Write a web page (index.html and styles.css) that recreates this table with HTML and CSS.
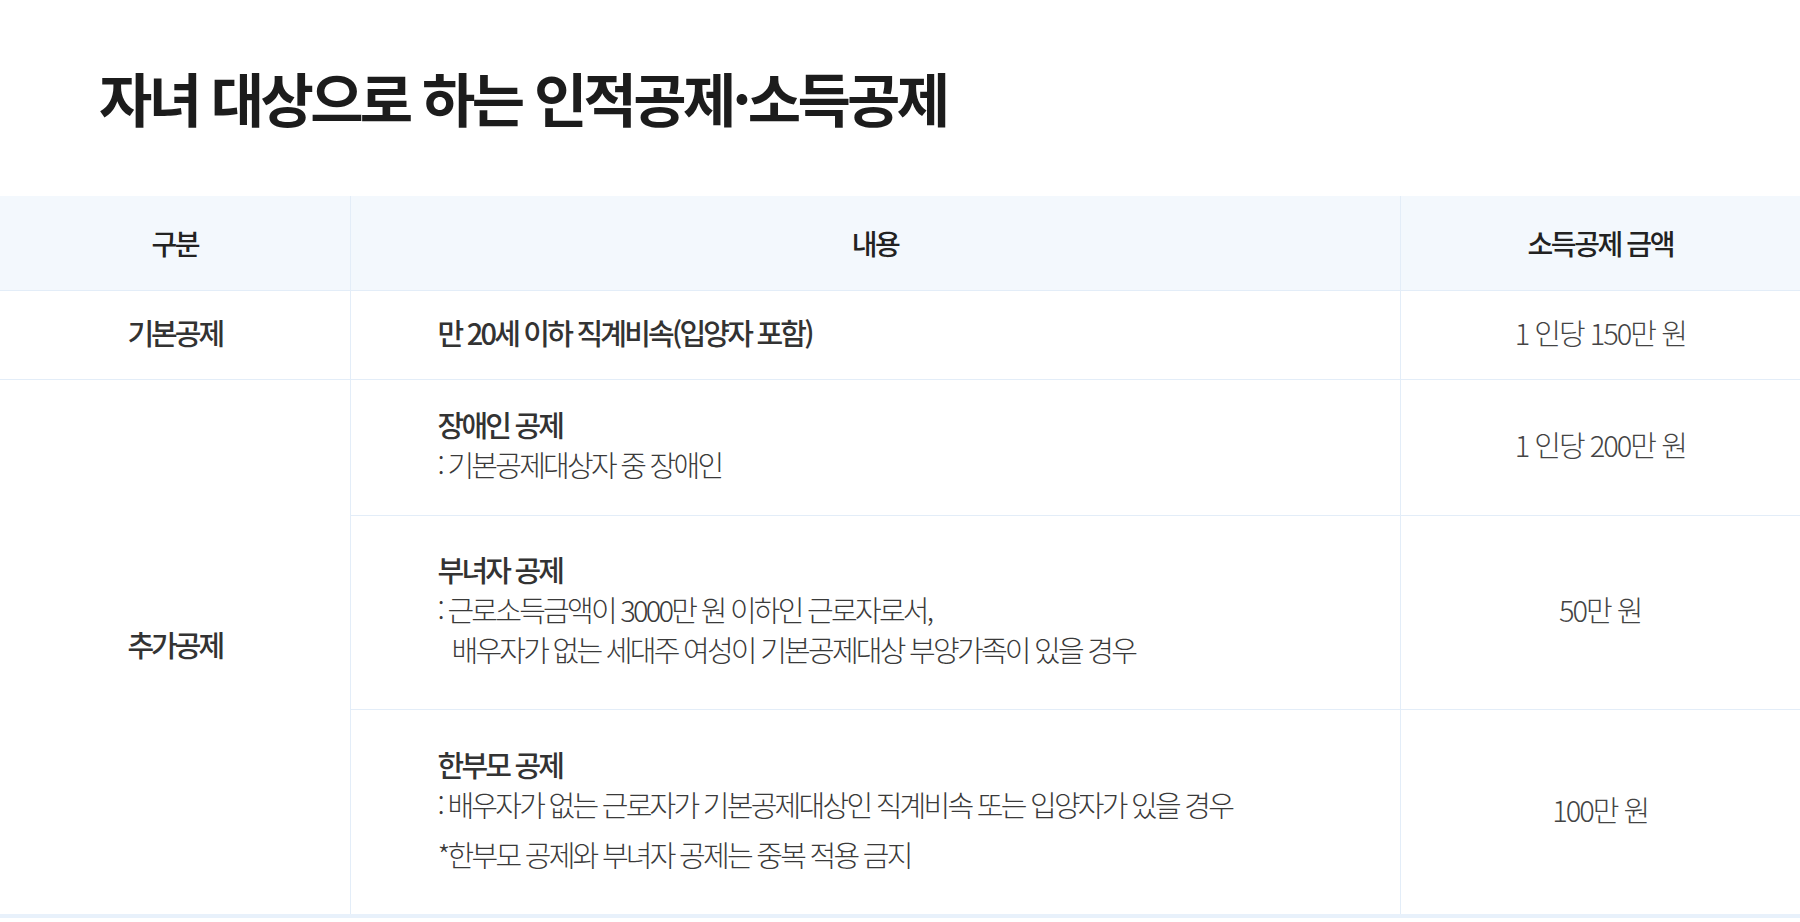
FILE: index.html
```html
<!DOCTYPE html>
<html lang="ko">
<head>
<meta charset="utf-8">
<title>자녀 대상으로 하는 인적공제·소득공제</title>
<link rel="stylesheet" href="styles.css">
</head>
<body>
<main class="page">
  <h1 class="title">자녀 대상으로 하는 인적공제·소득공제</h1>
  <table class="tbl">
    <colgroup>
      <col class="c1">
      <col class="c2">
      <col class="c3">
    </colgroup>
    <thead>
      <tr class="head">
        <th>구분</th>
        <th>내용</th>
        <th>소득공제 금액</th>
      </tr>
    </thead>
    <tbody>
      <tr class="r1">
        <td class="cat">기본공제</td>
        <td class="content"><span class="strong">만 20세 이하 직계비속(입양자 포함)</span></td>
        <td class="amt">1 인당 150만 원</td>
      </tr>
      <tr class="r2">
        <td class="cat" rowspan="3">추가공제</td>
        <td class="content">
          <div class="strong">장애인 공제</div>
          <div class="desc">: 기본공제대상자 중 장애인</div>
        </td>
        <td class="amt">1 인당 200만 원</td>
      </tr>
      <tr class="r3">
        <td class="content">
          <div class="strong">부녀자 공제</div>
          <div class="desc">: 근로소득금액이 3000만 원 이하인 근로자로서,</div>
          <div class="desc indent">배우자가 없는 세대주 여성이 기본공제대상 부양가족이 있을 경우</div>
        </td>
        <td class="amt">50만 원</td>
      </tr>
      <tr class="r4">
        <td class="content">
          <div class="strong">한부모 공제</div>
          <div class="desc">: 배우자가 없는 근로자가 기본공제대상인 직계비속 또는 입양자가 있을 경우</div>
          <div class="desc note">*한부모 공제와 부녀자 공제는 중복 적용 금지</div>
        </td>
        <td class="amt">100만 원</td>
      </tr>
    </tbody>
  </table>
</main>
</body>
</html>
```

FILE: styles.css
```css
html, body {
  margin: 0;
  padding: 0;
  background: #ffffff;
}

body {
  font-family: "Noto Sans CJK KR", "Noto Sans", sans-serif;
  color: #333;
}

.page {
  width: 1800px;
}

.title {
  margin: 0 0 63px 0;
  padding: 62px 0 0 99px;
  font-size: 58px;
  line-height: 71px;
  font-weight: 700;
  letter-spacing: -3.7px;
  color: #1c1c1c;
}

.tbl {
  width: 1800px;
  border-collapse: collapse;
  table-layout: fixed;
  border-bottom: 4px solid #e8f1fb;
}

.c1 { width: 350px; }
.c2 { width: 1050px; }
.c3 { width: 400px; }

.tbl th,
.tbl td {
  padding: 0;
  vertical-align: middle;
  border: 1px solid #e3edf8;
  font-size: 29px;
  line-height: 40px;
  letter-spacing: -2.5px;
}

.tbl td {
  padding-bottom: 7px;
}

.tbl tr > :first-child { border-left: none; }
.tbl tr > :last-child { border-right: none; }
.tbl tr > .cat { border-left: none; }

.head th {
  height: 94px;
  background: #f3f8fd;
  font-size: 28px;
  letter-spacing: -2.4px;
  font-weight: 500;
  color: #222;
  border-top: none;
  border-bottom: none;
  text-align: center;
}

.cat {
  text-align: center;
  font-weight: 500;
  color: #333;
  letter-spacing: -3px !important;
}

.content {
  padding-left: 87px !important;
  text-align: left;
}

.strong {
  font-weight: 500;
  color: #333;
  letter-spacing: -2.8px;
}

.desc {
  font-weight: 300;
  color: #3a3a3a;
  letter-spacing: -2.75px;
}

.indent {
  padding-left: 14px;
}

.note {
  margin-top: 10px;
}

.amt {
  text-align: center;
  font-weight: 300;
  color: #444;
  letter-spacing: -2px !important;
}

.r1 td { height: 81px; }
.r2 td { height: 128px; }
.r3 td { height: 186px; }
.r4 td { height: 197px; }
```
